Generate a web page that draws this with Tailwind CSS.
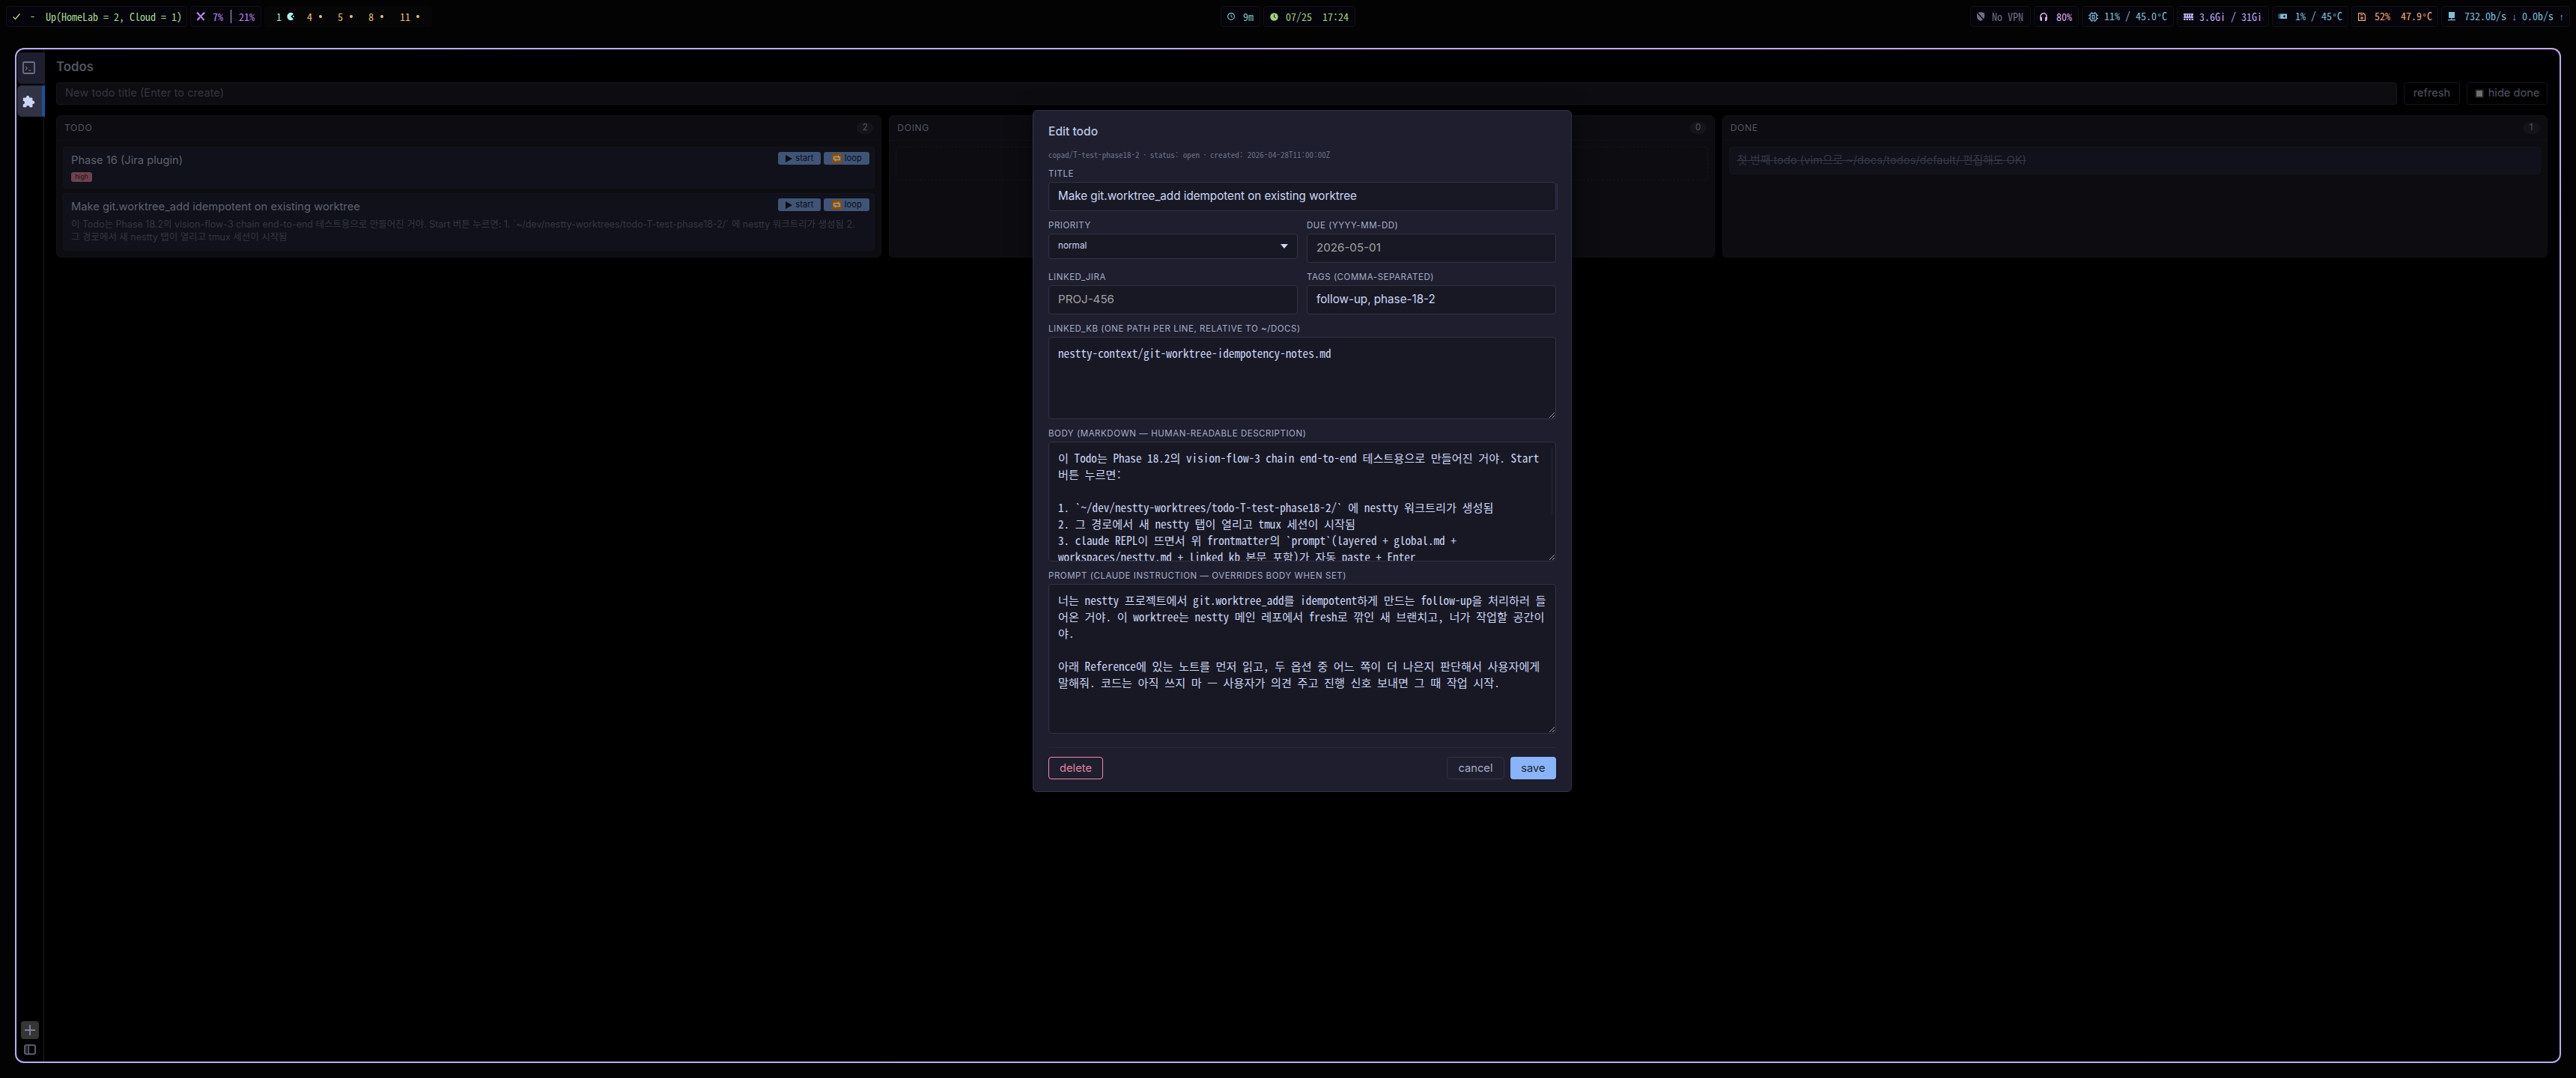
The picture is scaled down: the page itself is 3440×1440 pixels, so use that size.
<!DOCTYPE html>
<html lang="ko">
<head>
  <meta charset="UTF-8" />
  <meta name="viewport" content="width=device-width, initial-scale=1.0" />
  <title>Todos</title>
  <script src="https://cdn.jsdelivr.net/npm/@tailwindcss/browser@4"></script>
</head>
<body class="w-[3440px] h-[1440px] overflow-hidden bg-[#030303] font-[Inter,'Noto_Sans_CJK_KR',sans-serif]">
  <!-- status bar -->
  <div class="h-16 pt-2 px-2 grid grid-cols-3 items-start font-['Noto_Sans_Mono_CJK_KR',monospace] text-[14px] leading-[26px] whitespace-pre">
    <div class="flex gap-1">
      <div class="w-[242px] h-7 pl-2 flex items-center rounded-[4px] border border-[#101018] bg-[#04040a] text-[#a6d98f]">
        <svg class="shrink-0 w-[10px] h-[10px] mr-[13px]" viewBox="0 0 10 10" fill="none" stroke="currentColor" stroke-width="1.4"><path d="M.5 5.5 3.5 8.5 9.5 1.5" /></svg>
        <span>-  Up(HomeLab = 2, Cloud = 1)</span>
      </div>
      <div class="w-[95px] h-7 pl-[7px] flex items-center rounded-[4px] border border-[#101018] bg-[#04040a] text-[#b88aeb]">
        <svg class="shrink-0 w-[12px] h-[12px] mr-[10px]" viewBox="0 0 12 12" fill="none" stroke="currentColor" stroke-width="2"><path d="M2 1.5 10.5 11M10.5 1 6.8 5M5 7 1.5 11" /><path d="M.6 2.2 2.8.6M8.7 3.3 11.5.8" stroke-width="1.6" /></svg>
        <span>7%</span>
        <span class="w-px h-[18px] mx-[10px] bg-[#c79bf2]"></span>
        <span>21%</span>
      </div>
      <div class="w-[224px] h-7 pl-4 flex items-center rounded-[4px] bg-[#060606] text-[#e0b96c]">
        <span class="w-[14px] text-[#94e2d5]">1</span>
        <svg class="shrink-0 w-[10px] h-[12px] mr-[17px] text-[#a5f3e8]" viewBox="0 0 10 12" fill="currentColor"><path d="M9 2.4A5 5.2 0 1 0 9 9.6L5.2 6z" /><circle cx="8.8" cy="6" r="1" /></svg>
        <span class="w-[16px]">4</span><span class="w-1 h-1 mr-[21px] rounded-full bg-[#e8c27a]"></span>
        <span class="w-[16px]">5</span><span class="w-1 h-1 mr-[21px] rounded-full bg-[#e8c27a]"></span>
        <span class="w-[16px]">8</span><span class="w-1 h-1 mr-[22px] rounded-full bg-[#e8c27a]"></span>
        <span class="w-[22px]">11</span><span class="w-1 h-1 rounded-full bg-[#e8c27a]"></span>
      </div>
    </div>
    <div class="flex justify-center gap-1">
      <div class="w-[53px] h-7 pl-2 flex items-center rounded-[4px] border border-[#101018] bg-[#04040a] text-[#7cc4bd]">
        <svg class="shrink-0 w-[10px] h-[10px] mr-[11px]" viewBox="0 0 10 10" fill="none" stroke="currentColor"><circle cx="5" cy="5" r="4.4" stroke-width="1.2" /><path d="M5 2.3V5.2L7 6.4" /></svg>
        <span>9m</span>
      </div>
      <div class="w-[123px] h-7 pl-2 flex items-center rounded-[4px] border border-[#101018] bg-[#04040a] text-[#a3cf7e]">
        <svg class="shrink-0 w-[11px] h-[11px] mr-[10px]" viewBox="0 0 11 11"><circle cx="5.5" cy="5.5" r="5.3" fill="currentColor" /><path d="M5.5 2.5V5.7L7.5 6.9" fill="none" stroke="#04040a" /></svg>
        <span>07/25  17:24</span>
      </div>
    </div>
    <div class="flex justify-end gap-1">
      <div class="w-[81px] h-7 pl-[7px] flex items-center rounded-[4px] border border-[#101018] bg-[#04040a] text-[#6c7083]">
        <svg class="shrink-0 w-[12px] h-[12px] mr-[9px]" viewBox="0 0 12 12"><path d="M6 0 11 1.6V6C11 9 9 11 6 12 3 11 1 9 1 6V1.6z" fill="currentColor" /><path d="M1 .5 11 11.5" stroke="#04040a" stroke-width="1.5" /></svg>
        <span>No VPN</span>
      </div>
      <div class="w-[60px] h-7 pl-[7px] flex items-center rounded-[4px] border border-[#101018] bg-[#04040a] text-[#dcb2ec]">
        <svg class="shrink-0 w-[10px] h-[11px] mr-[12px]" viewBox="0 0 10 11"><path d="M1 8V5A4 4.2 0 0 1 9 5V8" fill="none" stroke="currentColor" stroke-width="1.5" /><path d="M.3 6H3V11H1.5L.3 9.8zM9.7 6H7V11H8.5L9.7 9.8z" fill="currentColor" /></svg>
        <span>80%</span>
      </div>
      <div class="w-[123px] h-7 pl-2 flex items-center rounded-[4px] border border-[#101018] bg-[#04040a] text-[#7cc0dc]">
        <svg class="shrink-0 w-[13px] h-[13px] mr-[8px]" viewBox="0 0 13 13" fill="none" stroke="currentColor" stroke-width="1.2"><rect x="2.2" y="2.2" width="8.6" height="8.6" rx="1" /><rect x="5" y="4.6" width="3" height="3.8" /><path d="M4.5 0V2M8.5 0V2M4.5 11V13M8.5 11V13M0 4.5H2M0 8.5H2M11 4.5H13M11 8.5H13" /></svg>
        <span>11% / 45.0<span class="inline-block w-[7px] font-['Liberation_Mono'] text-[12px]">°</span>C</span>
      </div>
      <div class="w-[123px] h-7 pl-2 flex items-center rounded-[4px] border border-[#101018] bg-[#04040a] text-[#bcaaf2]">
        <svg class="shrink-0 w-[13px] h-[9px] mr-[8px]" viewBox="0 0 13 9" fill="currentColor"><path d="M0 0H13V2.5H12V4H13V6.3H0V4H1V2.5H0zM0 7H13V9H0z" /><path d="M3.5 1.5V4M6.5 1.5V4M9.5 1.5V4M3 7V9M6.5 7V9M10 7V9" stroke="#04040a" /></svg>
        <span>3.6Gi / 31Gi</span>
      </div>
      <div class="w-[102px] h-7 pl-2 flex items-center rounded-[4px] border border-[#101018] bg-[#04040a] text-[#7cc0dc]">
        <svg class="shrink-0 w-[11px] h-[8px] mr-[11px]" viewBox="0 0 11 8" fill="currentColor"><path d="M0 .5H1V7H0zM2 .5H11V7H2z" /><circle cx="7.5" cy="3.8" r="1.4" fill="#04040a" /></svg>
        <span>1% / 45<span class="inline-block w-[7px] font-['Liberation_Mono'] text-[12px]">°</span>C</span>
      </div>
      <div class="w-[116px] h-7 pl-2 flex items-center rounded-[4px] border border-[#101018] bg-[#04040a] text-[#f0a67c]">
        <svg class="shrink-0 w-[10px] h-[11px] mr-[12px]" viewBox="0 0 10 11" fill="none" stroke="currentColor" stroke-width="1.2"><path d="M.6.6H7L9.4 3V10.4H.6z" /><path d="M3 2.8H6.5" /><circle cx="5" cy="7" r="1.2" /></svg>
        <span>52%  47.9<span class="inline-block w-[7px] font-['Liberation_Mono'] text-[12px]">°</span>C</span>
      </div>
      <div class="w-[172px] h-7 pl-2 flex items-center rounded-[4px] border border-[#101018] bg-[#04040a] text-[#7cc0dc]">
        <svg class="shrink-0 w-[10px] h-[12px] mr-[12px]" viewBox="0 0 10 12" fill="currentColor"><path d="M1 0H9V8H1zM4.4 8H5.6V10H10V11.3H0V10H4.4z" /></svg>
        <span>732.0b/s <span class="inline-block w-[7px] font-['Liberation_Mono'] text-[13px]">↓</span> 0.0b/s <span class="inline-block w-[7px] font-['Liberation_Mono'] text-[13px]">↑</span></span>
      </div>
    </div>
  </div>

  <!-- window frame -->
  <div class="ml-5 w-[3400px] h-[1356px] p-[2px] rounded-[12px] bg-linear-to-tr from-[#b4aef5] to-[#c0a6f3]">
    <div class="relative h-full flex rounded-[10px] bg-black">
      <!-- tab strip -->
      <div class="w-[37px] shrink-0 pt-1 pb-[9px] flex flex-col border-r border-[#1c1c1e]">
        <div class="ml-px w-[37px] h-[42px] mb-0.5 pl-[7px] pt-[12px] shrink-0 rounded-l-[6px] bg-[#1e1e2e] z-10">
          <svg class="w-[17px] h-[17px]" viewBox="0 0 17 17" fill="none" stroke="#6c7086"><rect x="1" y="1" width="15" height="15" rx="1.4" stroke-width="1.8" /><path d="M4 6.8 6.3 9.2 4 11.6M8 12H11.5" stroke-width="1.1" /></svg>
        </div>
        <div class="ml-px w-[37px] h-[42px] pl-[7px] shrink-0 flex items-center rounded-l-[6px] border-y border-[#2b2b3a] border-r-4 border-r-[#15539e] bg-[#313244] z-10">
          <svg class="w-[17px] h-[17px]" viewBox="0 0 17 17" fill="#cdd6f4"><path d="M1.6 3.6H5A2.2 2.2 0 1 1 9.2 3.6H12.7Q13.4 3.6 13.4 4.4V7.6A2.2 2.2 0 1 1 13.4 11.8V15.4Q13.4 16.2 12.7 16.2H9.6A2.2 2.2 0 0 0 5 16.2H1.6Q.8 16.2 .8 15.4V12.2A2.2 2.2 0 0 0 .8 7.8V4.4Q.8 3.6 1.6 3.6z" /></svg>
        </div>
        <div class="mt-auto flex flex-col items-center gap-[7px]">
          <div class="w-6 h-6 flex items-center justify-center rounded-[4px] bg-[#353535]">
            <svg class="w-[14px] h-[14px]" viewBox="0 0 14 14" stroke="#7b8099" stroke-width="2"><path d="M7 0V14M0 7H14" /></svg>
          </div>
          <svg class="w-4 h-[14px]" viewBox="0 0 16 14"><rect x="1" y="1" width="14" height="12" rx="2" fill="none" stroke="#71768c" stroke-width="1.6" /><path d="M1.8 1.8H6V12.2H1.8z" fill="#25262e" /><path d="M6.5 1V13" stroke="#71768c" /></svg>
        </div>
      </div>

      <!-- board -->
      <div class="flex-1 pt-[13px] pl-4 pr-4">
        <h1 class="h-5 leading-5 text-[16.8px] font-semibold text-[#52555f]">Todos</h1>
        <div class="mt-[11px] h-[30px] flex gap-[9px]">
          <div class="flex-1 px-[11px] flex items-center rounded-[4px] border border-[#15151c] bg-[#0c0c11] text-[14.65px] text-[#35363d]">New todo title (Enter to create)</div>
          <div class="w-[75px] flex items-center justify-center rounded-[4px] border border-[#15151c] text-[14.6px] text-[#525562]">refresh</div>
          <div class="w-[108px] flex items-center justify-center gap-[6px] rounded-[4px] border border-[#15151c] text-[14.6px] text-[#525562]">
            <span class="w-3 h-3 rounded-[2px] border-2 border-[#1c1c1c] bg-[#6e6e6e]"></span>hide done
          </div>
        </div>
        <div class="mt-[14px] h-[190px] grid grid-cols-3 gap-[10px]">
          <div class="rounded-[6px] border border-[#111118] bg-[#0c0c11]">
            <div class="h-[33px] pl-[10px] pr-[10px] flex items-center justify-between border-b border-[#111118] text-[12.2px] tracking-[0.6px] text-[#535663]">TODO
              <span class="w-[22px] h-4 flex items-center justify-center rounded-full bg-[#14151b] text-[11.5px] tracking-normal">2</span>
            </div>
            <div class="p-2 flex flex-col gap-[6px]">
              <div class="h-[56px] pl-[10px] pr-[6px] pt-[6px] flex justify-between rounded-[4px] border border-[#15171c] bg-[#10111a]">
                <div>
                  <div class="mt-[2px] h-[18px] leading-[18px] text-[14.7px] text-[#5d6170]">Phase 16 (Jira plugin)</div>
                  <div class="mt-[7px] w-7 h-[13px] leading-[12px] text-center rounded-[3px] bg-[#71404e] text-[8.5px] text-[#14141c]">high</div>
                </div>
                <div class="flex gap-1 text-[11.2px] text-[#0c0d14]">
                  <div class="w-[57px] h-[17px] flex items-center justify-center gap-1 rounded-[3px] bg-[#405478]"><svg class="w-[9px] h-[10px]" viewBox="0 0 9 10" fill="currentColor"><path d="M0 0 9 5 0 10z" /></svg>start</div>
                  <div class="w-[61px] h-[17px] flex items-center justify-center gap-1 rounded-[3px] bg-[#405478]"><svg class="w-[13px] h-[13px]" viewBox="0 0 13 13"><rect width="13" height="13" rx="1.5" fill="#854f08" /><path d="M2.6 8.5V4.5H8.5M10.4 4.5V8.5H4.5" fill="none" stroke="#a89c8c" stroke-width="1.5" /><path d="M7.8 2 10.6 4.4 7.8 6.8zM5.2 6.2 2.4 8.6 5.2 11z" fill="#a89c8c" /></svg>loop</div>
                </div>
              </div>
              <div class="h-[77px] pl-[10px] pr-[6px] pt-[6px] rounded-[4px] border border-[#15171c] bg-[#10111a]">
                <div class="flex justify-between">
                  <div class="mt-[2px] h-[18px] leading-[18px] text-[14.7px] text-[#5d6170]">Make git.worktree_add idempotent on existing worktree</div>
                  <div class="flex gap-1 text-[11.2px] text-[#0c0d14]">
                    <div class="w-[57px] h-[17px] flex items-center justify-center gap-1 rounded-[3px] bg-[#405478]"><svg class="w-[9px] h-[10px]" viewBox="0 0 9 10" fill="currentColor"><path d="M0 0 9 5 0 10z" /></svg>start</div>
                    <div class="w-[61px] h-[17px] flex items-center justify-center gap-1 rounded-[3px] bg-[#405478]"><svg class="w-[13px] h-[13px]" viewBox="0 0 13 13"><rect width="13" height="13" rx="1.5" fill="#854f08" /><path d="M2.6 8.5V4.5H8.5M10.4 4.5V8.5H4.5" fill="none" stroke="#a89c8c" stroke-width="1.5" /><path d="M7.8 2 10.6 4.4 7.8 6.8zM5.2 6.2 2.4 8.6 5.2 11z" fill="#a89c8c" /></svg>loop</div>
                  </div>
                </div>
                <div class="mt-[6px] leading-[17px] text-[12.47px] whitespace-nowrap text-[#353742]">이 Todo는 Phase 18.2의 vision-flow-3 chain end-to-end 테스트용으로 만들어진 거야. Start 버튼 누르면: 1. `~/dev/nestty-worktrees/todo-T-test-phase18-2/` 에 nestty 워크트리가 생성됨 2.<br />그 경로에서 새 nestty 탭이 열리고 tmux 세션이 시작됨</div>
              </div>
            </div>
          </div>
          <div class="rounded-[6px] border border-[#111118] bg-[#0c0c11]">
            <div class="h-[33px] pl-[10px] pr-[10px] flex items-center justify-between border-b border-[#111118] text-[12.2px] tracking-[0.6px] text-[#535663]">DOING
              <span class="w-[22px] h-4 flex items-center justify-center rounded-full bg-[#14151b] text-[11.5px] tracking-normal">0</span>
            </div>
            <div class="p-2"><div class="h-[45px] rounded-[4px] border border-dashed border-[#16171c]"></div></div>
          </div>
          <div class="rounded-[6px] border border-[#111118] bg-[#0c0c11]">
            <div class="h-[33px] pl-[10px] pr-[10px] flex items-center justify-between border-b border-[#111118] text-[12.2px] tracking-[0.6px] text-[#535663]">DONE
              <span class="w-[22px] h-4 flex items-center justify-center rounded-full bg-[#14151b] text-[11.5px] tracking-normal">1</span>
            </div>
            <div class="p-2"><div class="h-[37px] px-[10px] flex items-center rounded-[4px] border border-[#14161b] bg-[#10111a] text-[14.7px] text-[#363843] line-through">첫 번째 todo (vim으로 ~/docs/todos/default/ 편집해도 OK)</div></div>
          </div>
        </div>
      </div>

      <!-- edit dialog -->
      <div class="absolute left-[1357px] top-[81px] w-[720px] h-[911px] px-5 pt-[18px] rounded-[6px] border border-[#313244] bg-[#1e1e2e] shadow-[0_8px_32px_rgba(0,0,0,0.5)] text-[#cdd6f4]">
        <h2 class="h-5 leading-5 text-[15.6px] font-medium text-[#bcc5e2]">Edit todo</h2>
        <div class="mt-3 h-4 leading-4 font-['Noto_Sans_Mono_CJK_KR',monospace] text-[11.05px] text-[#6c7086] whitespace-pre">copad/T-test-phase18-2 · status: open · created: 2026-04-28T11:00:00Z</div>

        <label class="mt-[11px] mb-1 block h-[14px] leading-[14px] text-[11.5px] tracking-[0.54px] text-[#a6adc8]">TITLE</label>
        <div class="relative h-[39px] px-3 flex items-center rounded-[4px] border border-[#313244] bg-[#181825] text-[15.2px]">Make git.worktree_add idempotent on existing worktree
          <span class="absolute -right-[3px] top-px w-px h-[35px] bg-[#3d3254]"></span>
        </div>

        <div class="mt-3 grid grid-cols-2 gap-x-3">
          <div>
            <label class="mb-1 block h-[14px] leading-[14px] text-[11.5px] tracking-[0.54px] text-[#a6adc8]">PRIORITY</label>
            <div class="h-[34px] pl-3 pr-[12px] flex items-center justify-between rounded-[4px] border border-[#313244] bg-[#181825] text-[11.75px]">normal
              <svg class="w-[10px] h-[6px]" viewBox="0 0 10 6" fill="#cdd6f4"><path d="M0 0H10L5 6z" /></svg>
            </div>
          </div>
          <div>
            <label class="mb-1 block h-[14px] leading-[14px] text-[11.5px] tracking-[0.54px] text-[#a6adc8]">DUE (YYYY-MM-DD)</label>
            <div class="h-[39px] px-3 flex items-center rounded-[4px] border border-[#313244] bg-[#181825] text-[15.15px] text-[#a0a0a0]">2026-05-01</div>
          </div>
          <div class="mt-3">
            <label class="mb-1 block h-[14px] leading-[14px] text-[11.5px] tracking-[0.54px] text-[#a6adc8]">LINKED_JIRA</label>
            <div class="h-[39px] px-3 flex items-center rounded-[4px] border border-[#313244] bg-[#181825] text-[15.15px] text-[#a0a0a0]">PROJ-456</div>
          </div>
          <div class="mt-3">
            <label class="mb-1 block h-[14px] leading-[14px] text-[11.5px] tracking-[0.54px] text-[#a6adc8]">TAGS (COMMA-SEPARATED)</label>
            <div class="h-[39px] px-3 flex items-center rounded-[4px] border border-[#313244] bg-[#181825] text-[15.2px]">follow-up, phase-18-2</div>
          </div>
        </div>

        <label class="mt-3 mb-1 block h-[14px] leading-[14px] text-[11.5px] tracking-[0.54px] text-[#a6adc8]">LINKED_KB (ONE PATH PER LINE, RELATIVE TO ~/DOCS)</label>
        <div class="relative h-[110px] px-3 pt-[9px] overflow-hidden rounded-[4px] border border-[#313244] bg-[#181825] font-['Noto_Sans_Mono_CJK_KR',monospace] text-[15.2px] leading-[22px] whitespace-pre">nestty-context/git-worktree-idempotency-notes.md<svg class="absolute right-[1px] bottom-[1px] w-[7px] h-[7px]" viewBox="0 0 7 7" stroke="#9a9aa2"><path d="M0 7 7 0M4 7 7 4" /></svg></div>

        <label class="mt-3 mb-1 block h-[14px] leading-[14px] text-[11.5px] tracking-[0.54px] text-[#a6adc8]">BODY (MARKDOWN — HUMAN-READABLE DESCRIPTION)</label>
        <div class="relative h-[160px] px-3 pt-[9px] overflow-hidden rounded-[4px] border border-[#313244] bg-[#181825] font-['Noto_Sans_Mono_CJK_KR',monospace] text-[15.2px] leading-[22px] whitespace-pre">이 Todo는 Phase 18.2의 vision-flow-3 chain end-to-end 테스트용으로 만들어진 거야. Start
버튼 누르면:

1. `~/dev/nestty-worktrees/todo-T-test-phase18-2/` 에 nestty 워크트리가 생성됨
2. 그 경로에서 새 nestty 탭이 열리고 tmux 세션이 시작됨
3. claude REPL이 뜨면서 위 frontmatter의 `prompt`(layered + global.md +
workspaces/nestty.md + linked kb 본문 포함)가 자동 paste + Enter<span class="absolute right-[3px] top-[7px] w-[3px] h-[90px] bg-[#1f1f2b]"></span><svg class="absolute right-[1px] bottom-[1px] w-[7px] h-[7px]" viewBox="0 0 7 7" stroke="#9a9aa2"><path d="M0 7 7 0M4 7 7 4" /></svg></div>

        <label class="mt-3 mb-1 block h-[14px] leading-[14px] text-[11.5px] tracking-[0.54px] text-[#a6adc8]">PROMPT (CLAUDE INSTRUCTION — OVERRIDES BODY WHEN SET)</label>
        <div class="relative h-[200px] px-3 pt-[9px] overflow-hidden rounded-[4px] border border-[#313244] bg-[#181825] font-['Noto_Sans_Mono_CJK_KR',monospace] text-[15.2px] leading-[22px] whitespace-pre">너는 nestty 프로젝트에서 git.worktree_add를 idempotent하게 만드는 follow-up을 처리하러 들
어온 거야. 이 worktree는 nestty 메인 레포에서 fresh로 깎인 새 브랜치고, 너가 작업할 공간이
야.

아래 Reference에 있는 노트를 먼저 읽고, 두 옵션 중 어느 쪽이 더 나은지 판단해서 사용자에게
말해줘. 코드는 아직 쓰지 마 — 사용자가 의견 주고 진행 신호 보내면 그 때 작업 시작.<svg class="absolute right-[1px] bottom-[1px] w-[7px] h-[7px]" viewBox="0 0 7 7" stroke="#9a9aa2"><path d="M0 7 7 0M4 7 7 4" /></svg></div>

        <div class="mt-[18px] pt-3 flex items-start gap-2 border-t border-[#282939] text-[14.7px]">
          <div class="w-[73px] h-[30px] mr-auto flex items-center justify-center rounded-[4px] border border-[#f38ba8] text-[#e0839f]">delete</div>
          <div class="w-[77px] h-[30px] flex items-center justify-center rounded-[4px] border border-[#313244] text-[#a6adc8]">cancel</div>
          <div class="w-[61px] h-[30px] flex items-center justify-center rounded-[4px] bg-[#89b4fa] text-[#1e1e2e]">save</div>
        </div>
      </div>
    </div>
  </div>
</body>
</html>
